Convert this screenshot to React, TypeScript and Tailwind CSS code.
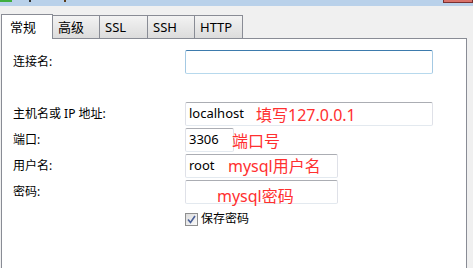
import React from "react";

const FONT = '"Noto Sans", "Noto Sans CJK SC", sans-serif';

const tabs = [
  { label: "常规", w: "w-[52px]", active: true },
  { label: "高级", w: "w-[47px]" },
  { label: "SSL", w: "w-[48px]" },
  { label: "SSH", w: "w-[47px]" },
  { label: "HTTP", w: "w-[48px]" },
];

function Field({
  width,
  focused,
  value,
  children,
}: {
  width: string;
  focused?: boolean;
  value?: string;
  children?: React.ReactNode;
}) {
  return (
    <div
      className={`relative h-[24px] ${width} border rounded-[2px] bg-white flex items-center pl-[3px] text-[13px] text-black ${
        focused
          ? "border-[#a4c9e3] border-t-[#3d7bad] border-b-[#b7d9ed]"
          : "border-[#dfe1e8] border-t-[#abadb3] border-b-[#e3e9ef]"
      }`}
    >
      {value}
      {children}
    </div>
  );
}

function Note({ text, className }: { text: string; className: string }) {
  return (
    <span className={`absolute text-[16px] leading-none text-[#ff3030] whitespace-nowrap ${className}`}>
      {text}
    </span>
  );
}

function Row({ label, children }: { label: string; children: React.ReactNode }) {
  return (
    <div className="flex items-center h-[24px]">
      <div className="w-[172px] text-[12px] text-black">{label}</div>
      {children}
    </div>
  );
}

export default function App() {
  return (
    <div
      className="w-[473px] h-[268px] bg-[#f0f0f0] overflow-hidden flex flex-col"
      style={{ fontFamily: FONT }}
    >
      {/* window title bar, cut off */}
      <div className="h-[6px] bg-[#b9d1ea] flex justify-between shrink-0">
        <div className="flex gap-[17px]">
          <div className="w-[12px] h-[2px] bg-[#3fae3f]" />
          <div className="w-[2px] h-[2px] bg-[#333]" />
          <div className="w-[2px] h-[2px] bg-[#5a3c1a] ml-[16px]" />
        </div>
        <div className="w-[30px] h-[3px] bg-[#d9726a] border-b border-x border-[#7a3030]" />
      </div>

      {/* tab strip */}
      <div className="flex items-end h-[32px] pl-[1px] shrink-0 relative z-10">
        {tabs.map((t) =>
          t.active ? (
            <div
              key={t.label}
              className={`${t.w} h-[25px] -mb-[1px] bg-white border border-b-0 border-[#898c95] pl-[8px] pt-[3px] text-[13px] text-black`}
            >
              {t.label}
            </div>
          ) : (
            <div
              key={t.label}
              className={`${t.w} h-[23px] bg-gradient-to-b from-[#f3f3f3] to-[#dcdcdc] border border-l-0 border-b-0 border-[#898c95] pl-[5px] pt-[2px] text-[13px] text-black`}
            >
              {t.label}
            </div>
          )
        )}
      </div>

      {/* panel */}
      <div className="ml-[1px] w-[466px] flex-1 bg-white border border-[#898c95] border-b-0 pl-[11px] pt-[11px] flex flex-col">
        <Row label="连接名:">
          <Field width="w-[248px]" focused />
        </Row>

        <div className="h-[28px]" />

        <div className="flex flex-col gap-[2px]">
          <Row label="主机名或 IP 地址:">
            <Field width="w-[248px]" value="localhost">
              <Note text="填写127.0.0.1" className="left-[70px] top-[4px]" />
            </Field>
          </Row>
          <Row label="端口:">
            <Field width="w-[49px]" value="3306">
              <Note text="端口号" className="left-[46px] top-[4px]" />
            </Field>
          </Row>
          <Row label="用户名:">
            <Field width="w-[153px]" value="root">
              <Note text="mysql用户名" className="left-[42px] top-[3px]" />
            </Field>
          </Row>
          <Row label="密码:">
            <Field width="w-[153px]">
              <Note text="mysql密码" className="left-[31px] top-[7px]" />
            </Field>
          </Row>
        </div>

        <div className="flex items-center mt-[6px] ml-[172px] gap-[3px] text-[12px] text-black">
          <div className="w-[13px] h-[13px] border border-[#8f8f8f] bg-gradient-to-br from-[#dcdcdc] to-[#fafafa] flex items-center justify-center">
            <svg width="9" height="9" viewBox="0 0 9 9">
              <path d="M1 4.5 L3.5 7.5 L8 1" fill="none" stroke="#4a5f97" strokeWidth="1.6" />
            </svg>
          </div>
          <span>保存密码</span>
        </div>
      </div>
    </div>
  );
}
